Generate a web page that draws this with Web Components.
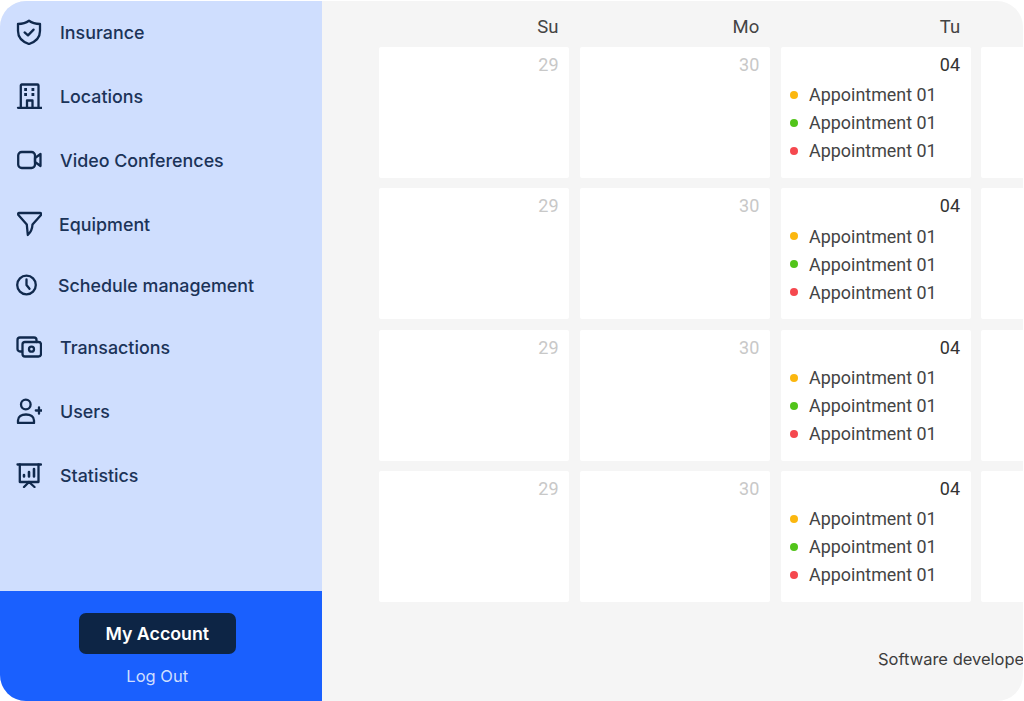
<!DOCTYPE html>
<html>
<head>
<meta charset="utf-8">
<style>
  html, body { margin: 0; padding: 0; background: #fff; }
  body { width: 1024px; height: 701px; overflow: hidden; }
</style>
</head>
<body>
<app-shell>
  <side-bar slot="side">
    <nav-item label="Insurance" icon="shield" style="--h:66px"></nav-item>
    <nav-item label="Locations" icon="building" style="--h:62px"></nav-item>
    <nav-item label="Video Conferences" icon="video" style="--h:66px"></nav-item>
    <nav-item label="Equipment" icon="funnel" style="--gap:17px;--h:62px"></nav-item>
    <nav-item label="Schedule management" icon="clock" style="--x:15px;--gap:17px;--h:60px"></nav-item>
    <nav-item label="Transactions" icon="cash" style="--h:64px"></nav-item>
    <nav-item label="Users" icon="user" style="--h:64px"></nav-item>
    <nav-item label="Statistics" icon="chart" style="--h:64px"></nav-item>
  </side-bar>
  <calendar-view slot="main"></calendar-view>
</app-shell>

<script>
// outer frame with the rounded corners
class AppShell extends HTMLElement {
  constructor() {
    super();
    this.attachShadow({ mode: "open" }).innerHTML = `
      <style>
        :host { display: flex; width: 1023px; height: 700px; margin-top: 1px; border-radius: 26px; overflow: hidden; background: #f5f5f5; }
        .side { flex: 0 0 321.500px; }
        .main { flex: 1; min-width: 0; }
      </style>
      <div class="side"><slot name="side"></slot></div>
      <div class="main"><slot name="main"></slot></div>`;
  }
}

class SideBar extends HTMLElement {
  constructor() {
    super();
    this.attachShadow({ mode: "open" }).innerHTML = `
      <style>
        :host { display: flex; flex-direction: column; height: 700px; background: #cfdefe; font-family: Inter, "Liberation Sans", sans-serif; }
        .items { flex: 1; margin-top: -2px; }
        .foot { flex: 0 0 110px; background: #1a60fe; display: flex; flex-direction: column; align-items: center; padding: 22px 7px 0 0; box-sizing: border-box; }
        .btn { width: 157px; height: 41px; border-radius: 7px; background: #0d2545; color: #fff; font-size: 17.800px; font-weight: 600; display: flex; align-items: center; justify-content: center; }
        .out { margin-top: 12px; color: #cfdefe; font-size: 16.500px; line-height: 20px; }
      </style>
      <div class="items"><slot></slot></div>
      <div class="foot"><div class="btn">My Account</div><div class="out">Log Out</div></div>`;
  }
}

const ICONS = {
  shield: `<path d="M13 1.800 C16 4 20 5 24 5 V12 C24 19 19 23 13 25 C7 23 2 19 2 12 V5 C6 5 10 4 13 1.800 Z"/><path d="M8.600 13.400 L12 16.400 L17.600 10.600"/>`,
  building: `<path d="M2 24.800 H25.500"/><path d="M4.800 24.800 V2.500 A1 1 0 0 1 5.800 1.500 H21.500 A1 1 0 0 1 22.500 2.500 V24.800"/><path d="M11 24.800 V17.500 H16.500 V24.800"/><path d="M8.200 6.500 H11 M15.500 6.500 H18.300 M8.200 11.500 H11 M15.500 11.500 H18.300" stroke-width="3" stroke-linecap="butt"/>`,
  video: `<rect x="2.200" y="5" width="16.800" height="16" rx="3.500"/><path d="M19 11 L24.500 7 V19 L19 15 Z"/>`,
  funnel: `<path d="M3.200 2 H24 Q25.800 2 25 4 L16.500 13.500 Q16.200 20 11.800 24 L10.800 13.500 L2.400 4 Q1.600 2 3.200 2 Z"/>`,
  clock: `<circle cx="11.500" cy="13" r="9.300"/><path d="M11.500 7.500 V13 L14.500 16.800"/>`,
  cash: `<path d="M6 17.500 H4 A2.500 2.500 0 0 1 1.500 15 V6 A2.500 2.500 0 0 1 4 3.500 H18 A2.500 2.500 0 0 1 20.500 6 V8"/><rect x="6.500" y="8" width="18.500" height="14.500" rx="2.500"/><circle cx="15.500" cy="15.200" r="2.500"/>`,
  user: `<circle cx="9.800" cy="6.500" r="4.800"/><path d="M2 25 V22.500 C2 18.500 5.500 16.500 10 16.500 C14.500 16.500 18 18.500 18 22.500 V25 Z"/><path d="M19.800 12.500 H26 M23 9.300 V15.700"/>`,
  chart: `<path d="M1.500 2.500 H25"/><path d="M3.800 2.500 V20 H22.500 V2.500"/><path d="M8 14.500 V13 M13 14.500 V10 M18 14.500 V7" stroke-width="2.600"/><path d="M13 20 L8 25 M13 20 L18.500 25"/>`
};

class NavItem extends HTMLElement {
  connectedCallback() {
    const icon = ICONS[this.getAttribute("icon")] || "";
    this.attachShadow({ mode: "open" }).innerHTML = `
      <style>
        :host { display: flex; align-items: center; height: var(--h, 64px); padding-left: var(--x, 16px); column-gap: var(--gap, 18px); color: #1b3358; font-size: 17.850px; font-weight: 500; }
        svg { flex: none; fill: none; stroke: #10294d; stroke-width: 2.300; stroke-linejoin: round; stroke-linecap: round; }
      </style>
      <svg width="26" height="26" viewBox="0 0 26 26">${icon}</svg>
      <span>${this.getAttribute("label")}</span>`;
  }
}

class DayCell extends HTMLElement {
  connectedCallback() {
    const active = this.hasAttribute("active");
    const day = this.getAttribute("day") || "";
    const rows = active ? ["#fbb70f", "#52c41a", "#f5484f"].map(c =>
      `<div class="appt"><i style="background:${c}"></i>Appointment 01</div>`).join("") : "";
    this.attachShadow({ mode: "open" }).innerHTML = `
      <style>
        :host { display: block; background: #fff; border-radius: 2px; padding: 7px 10.500px 0 9.500px; box-sizing: border-box; overflow: hidden; min-width: 0; }
        .num { text-align: right; height: 22px; font-size: 18px; line-height: 22px; color: ${active ? "#333" : "#c8c8c8"}; margin-bottom: 5px; }
        .appt { display: flex; align-items: center; height: 28px; font-size: 17.900px; color: #444; white-space: nowrap; }
        i { flex: none; width: 8px; height: 8px; border-radius: 50%; margin-right: 11px; }
      </style>
      <div class="num">${day}</div>${rows}`;
  }
}

class CalendarView extends HTMLElement {
  constructor() {
    super();
    const heads = ["Su", "Mo", "Tu", ""].map(d => `<div class="head">${d}</div>`).join("");
    let cells = "";
    for (let r = 0; r < 4; r++) {
      cells += `<day-cell day="29"></day-cell><day-cell day="30"></day-cell><day-cell day="04" active></day-cell><day-cell></day-cell>`;
    }
    this.attachShadow({ mode: "open" }).innerHTML = `
      <style>
        :host { display: block; height: 700px; overflow: hidden; padding-left: 57.500px; font-family: Roboto, "Liberation Sans", sans-serif; }
        .grid { display: grid; grid-template-columns: repeat(4, 190px); column-gap: 10.800px; grid-template-rows: 35.700px repeat(4, 131px); row-gap: 10.300px; width: 900px; }
        .head { text-align: right; padding: 16px 10.500px 0 0; font-size: 18.500px; line-height: 21px; color: #444; box-sizing: border-box; }
        .foot { font-family: Inter, "Liberation Sans", sans-serif; margin: 47px 0 0 499px; font-size: 16.500px; color: #3d3d3d; white-space: nowrap; }
      </style>
      <div class="grid">${heads}${cells}</div>
      <div class="foot">Software developer</div>`;
  }
}

customElements.define("app-shell", AppShell);
customElements.define("side-bar", SideBar);
customElements.define("nav-item", NavItem);
customElements.define("day-cell", DayCell);
customElements.define("calendar-view", CalendarView);
</script>
</body>
</html>
